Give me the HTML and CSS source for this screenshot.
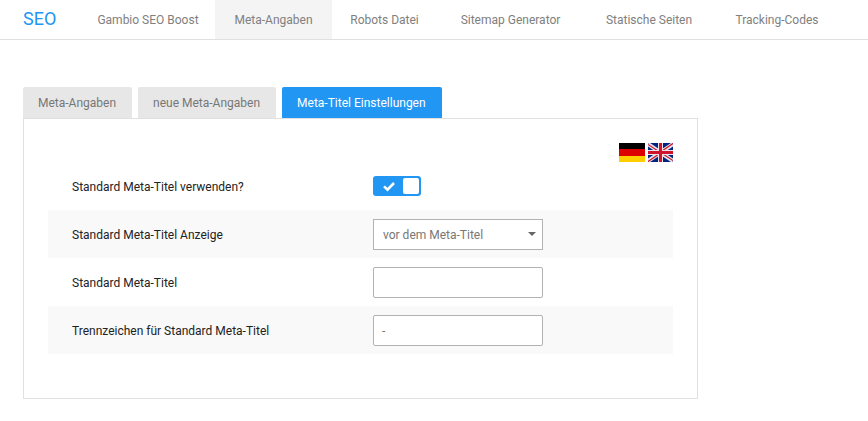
FILE: index.html
```html
<!DOCTYPE html>
<html lang="de">
<head>
<meta charset="utf-8">
<meta name="viewport" content="width=device-width, initial-scale=1">
<title>SEO</title>
<link rel="stylesheet" href="styles.css">
</head>
<body>
<header class="topbar">
  <h1 class="brand">SEO</h1>
  <nav class="nav">
    <a href="#boost">Gambio SEO Boost</a>
    <a href="#meta" class="active">Meta-Angaben</a>
    <a href="#robots">Robots Datei</a>
    <a href="#sitemap">Sitemap Generator</a>
    <a href="#static">Statische Seiten</a>
    <a href="#tracking">Tracking-Codes</a>
  </nav>
</header>
<main class="content">
  <div class="tabs">
    <button type="button" class="tab">Meta-Angaben</button>
    <button type="button" class="tab">neue Meta-Angaben</button>
    <button type="button" class="tab selected">Meta-Titel Einstellungen</button>
  </div>
  <form class="panel">
    <div class="languages">
      <button type="button" class="flag" aria-label="Deutsch">
        <svg width="26" height="19" viewBox="0 0 26 19" shape-rendering="crispEdges">
          <path fill="#000" d="M0 0h26v6H0z"/>
          <path fill="#d00" d="M0 6h26v7H0z"/>
          <path fill="#ffce00" d="M0 13h26v6H0z"/>
        </svg>
      </button>
      <button type="button" class="flag" aria-label="English">
        <svg width="25" height="19" viewBox="0 0 25 19">
          <path fill="#00247d" d="M0 0h25v19H0z"/>
          <path stroke="#e8e4ee" stroke-width="4" d="M0 1l25 17M25 1L0 18"/>
          <path stroke="#cf142b" stroke-width="1.2" d="M0 1.4L10 8M25 17.6L15 11M25 .4L14 8M0 18.6L11 11"/>
          <path fill="#e8e4ee" d="M10 0h5v19h-5zM0 7h25v5H0z"/>
          <path fill="#cf142b" d="M11 0h3v19h-3zM0 8h25v3H0z"/>
        </svg>
      </button>
    </div>
    <div class="row">
      <label for="use-default">Standard Meta-Titel verwenden?</label>
      <span class="switch">
        <input type="checkbox" id="use-default" checked>
        <svg class="check" width="12" height="10" viewBox="0 0 12 10" fill="none" stroke="#fff" stroke-width="2.6"><path d="M1 4.4l3.5 3.2L11 1"/></svg>
      </span>
    </div>
    <div class="row">
      <label for="position">Standard Meta-Titel Anzeige</label>
      <span class="select">
        <select id="position" class="field"><option>vor dem Meta-Titel</option><option>nach dem Meta-Titel</option></select>
        <svg class="caret" width="8" height="4" viewBox="0 0 8 4"><path fill="#666" d="M0 0h8L4 4z"/></svg>
      </span>
    </div>
    <div class="row">
      <label for="title">Standard Meta-Titel</label>
      <input type="text" id="title" class="field">
    </div>
    <div class="row">
      <label for="separator">Trennzeichen für Standard Meta-Titel</label>
      <input type="text" id="separator" class="field" value="-">
    </div>
  </form>
</main>
</body>
</html>
```
FILE: styles.css
```css
* {
  box-sizing: border-box;
}

body {
  margin: 0;
  background: #fff;
  color: #222;
  font: 12px/16px Roboto, sans-serif;
}

button,
input,
select {
  margin: 0;
  font: inherit;
}

.topbar {
  display: flex;
  height: 40px;
  padding-right: 28px;
  border-bottom: 1px solid #e0e0e0;
}

.brand {
  flex: 0 0 81px;
  margin: 0;
  padding-left: 23px;
  color: #2196f3;
  font-size: 18px;
  font-weight: 400;
  line-height: 38px;
}

.nav {
  display: grid;
  flex: 1;
  grid-template-columns: 134fr 117fr 105fr 147fr 130fr 126fr;
}

.nav a {
  padding-top: 1px;
  color: #808080;
  line-height: 38px;
  text-align: center;
  text-decoration: none;
  white-space: nowrap;
}

.nav .active {
  background: #f4f4f4;
}

.content {
  max-width: 721px;
  padding: 47px 23px 22px;
}

.tabs {
  display: flex;
  gap: 6px;
}

.tab {
  height: 31px;
  padding: 0 16px 0 15px;
  border: 0;
  border-radius: 2px 2px 0 0;
  background: #e7e7e7;
  color: #777;
}

.tab.selected {
  background: #2196f3;
  color: #fff;
}

.panel {
  padding: 24px 24px 44px;
  border: 1px solid #e0e0e0;
}

.languages {
  display: flex;
  justify-content: flex-end;
  gap: 3px;
}

.flag {
  padding: 0;
  border: 0;
  background: none;
}

.flag svg {
  display: block;
}

.row {
  display: grid;
  grid-template-columns: 301px 170px;
  align-items: center;
  height: 48px;
  padding: 0 24px;
}

.row:nth-child(odd) {
  background: #f9f9f9;
}

.row label {
  padding-top: 2px;
}

.field {
  width: 100%;
  height: 31px;
  padding: 2px 8px 0;
  border: 1px solid #b2b2b2;
  border-radius: 2px;
  background: #fff;
  color: #777;
}

.select {
  position: relative;
}

.select .field {
  display: block;
  padding: 2px 9px 0;
  border-radius: 0;
  appearance: none;
}

.caret {
  position: absolute;
  top: 13px;
  right: 7px;
  pointer-events: none;
}

.switch {
  position: relative;
  width: 48px;
  height: 20px;
}

.switch input {
  display: flex;
  justify-content: flex-end;
  width: 48px;
  height: 20px;
  padding: 2px;
  border-radius: 3px;
  background: #2196f3;
  appearance: none;
}

.switch input::before {
  width: 16px;
  height: 16px;
  border-radius: 2px;
  background: #fff;
  content: "";
}

.switch input:not(:checked) {
  justify-content: flex-start;
  background: #b2b2b2;
}

.check {
  position: absolute;
  top: 6px;
  left: 10px;
  pointer-events: none;
}
```
